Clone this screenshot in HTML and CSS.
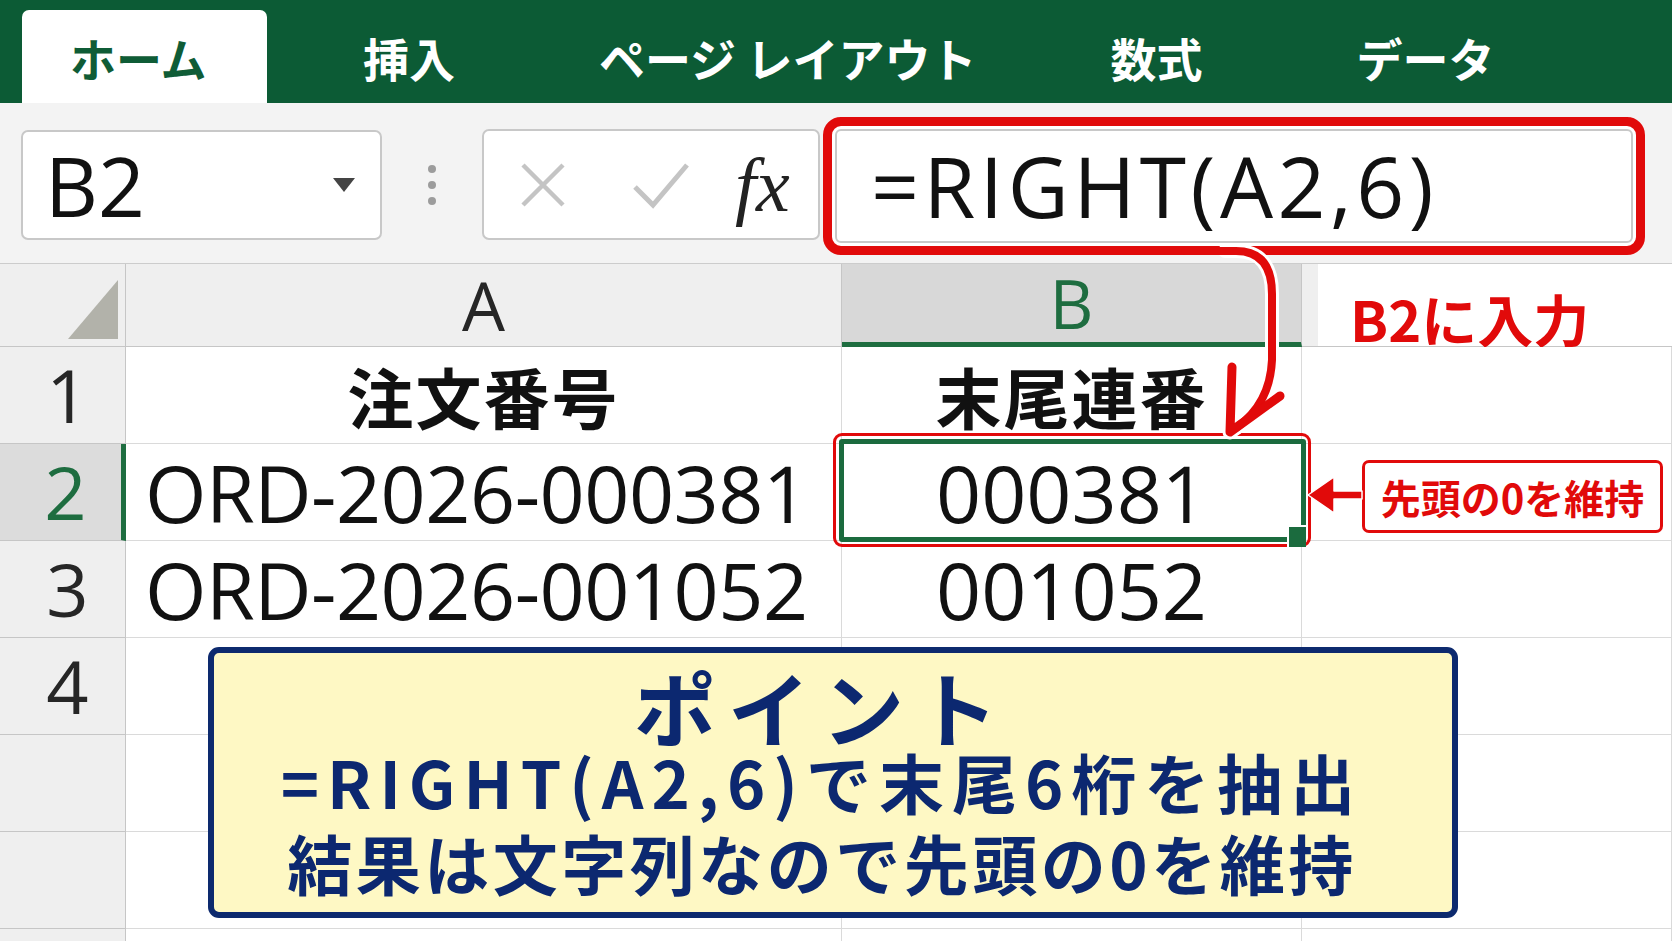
FILE: index.html
```html
<!DOCTYPE html>
<html lang="ja">
<head>
<meta charset="utf-8">
<title>RIGHT関数</title>
<link rel="stylesheet" href="styles.css">
</head>
<body>
<div class="app">
  <nav class="ribbon">
    <div class="tab active">ホーム</div>
    <div class="tab">挿入</div>
    <div class="tab">ページ レイアウト</div>
    <div class="tab tab-narrow">数式</div>
    <div class="tab">データ</div>
  </nav>

  <div class="fbar">
    <div class="namebox"><span class="nb-text">B2</span><span class="caret"></span></div>
    <div class="dots"><i></i><i></i><i></i></div>
    <div class="fnbox">
      <svg class="ic-x" width="48" height="48" viewBox="0 0 48 48"><path d="M4 4 L44 44 M44 4 L4 44" stroke="#c4c4c4" stroke-width="4.5" fill="none"/></svg>
      <svg class="ic-ok" width="58" height="48" viewBox="0 0 58 48"><path d="M3 26 L21 44 L55 4" stroke="#c4c4c4" stroke-width="5" fill="none"/></svg>
      <span class="fx">fx</span>
    </div>
    <div class="formula-wrap"><div class="formula">=RIGHT(A2,6)</div></div>
  </div>

  <div class="sheet">
    <div class="c h corner"><span class="tri"></span></div>
    <div class="c h ch">A</div>
    <div class="c h ch chb">B</div>
    <div class="c h chc"><div class="label">B2に入力</div></div>

    <div class="c h rh">1</div>
    <div class="c hd">注文番号</div>
    <div class="c hd">末尾連番</div>
    <div class="c"></div>

    <div class="c h rh rh-sel">2</div>
    <div class="c ca">ORD-2026-000381</div>
    <div class="c cb sel">000381<span class="red-ring"></span><span class="green-ring"></span><span class="handle"></span></div>
    <div class="c"></div>

    <div class="c h rh">3</div>
    <div class="c ca">ORD-2026-001052</div>
    <div class="c cb">001052</div>
    <div class="c"></div>

    <div class="c h rh">4</div>
    <div class="c"></div>
    <div class="c"></div>
    <div class="c"></div>

    <div class="c h rh"></div>
    <div class="c"></div>
    <div class="c"></div>
    <div class="c"></div>

    <div class="c h rh"></div>
    <div class="c"></div>
    <div class="c"></div>
    <div class="c"></div>

    <div class="c h rh"></div>
    <div class="c"></div>
    <div class="c"></div>
    <div class="c"></div>

    <div class="callout">先頭の0を維持</div>

    <div class="point">
      <div class="p1">ポイント</div>
      <div class="p2">=RIGHT(A2,6)で末尾6桁を抽出</div>
      <div class="p3">結果は文字列なので先頭の0を維持</div>
    </div>
  </div>

  <svg class="arrows" width="1672" height="941" viewBox="0 0 1672 941">
    <path d="M1225 251 L1236 251 Q1272 251 1272 294 L1272 360 Q1270 404 1236 428" stroke="#fff" stroke-width="14" fill="none" stroke-linecap="round"/>
    <path d="M1232 367 L1230 432 L1280 396" stroke="#fff" stroke-width="15" fill="none" stroke-linecap="round" stroke-linejoin="round"/>
    <path d="M1185 251 L1236 251 Q1272 251 1272 294 L1272 360 Q1270 404 1236 428" stroke="#e10a0a" stroke-width="8" fill="none" stroke-linecap="round"/>
    <path d="M1232 367 L1230 432 L1280 396" stroke="#e10a0a" stroke-width="9" fill="none" stroke-linecap="round" stroke-linejoin="round"/>
    <path d="M1362 491 L1334 491 L1334 477 L1308 495 L1334 513 L1334 499 L1362 499 Z" fill="#e10a0a" stroke="#fff" stroke-width="1.5" stroke-linejoin="round"/>
  </svg>
</div>
</body>
</html>
```

FILE: styles.css
```css
html, body {
  margin: 0;
  padding: 0;
}
body {
  width: 1672px;
  height: 941px;
  overflow: hidden;
  background: #ffffff;
  font-family: "Noto Sans CJK JP", "Noto Sans", sans-serif;
}
.app {
  position: relative;
  width: 1672px;
  height: 941px;
  overflow: hidden;
}

/* ribbon */
.ribbon {
  height: 103px;
  box-sizing: border-box;
  background: #0c5b35;
  display: flex;
  align-items: flex-end;
  padding-left: 22px;
  gap: 48px;
}
.tab {
  height: 93px;
  padding: 0 48px;
  display: flex;
  align-items: center;
  font-size: 46px;
  font-weight: 700;
  color: #ffffff;
  line-height: 1;
  white-space: nowrap;
}
.tab-narrow {
  margin-left: -10px;
  margin-right: 10px;
}
.tab.active {
  width: 245px;
  box-sizing: border-box;
  background: #ffffff;
  color: #0f5c36;
  border-radius: 7px 7px 0 0;
}

/* formula bar */
.fbar {
  height: 160px;
  box-sizing: border-box;
  background: #f3f3f3;
  display: flex;
  align-items: flex-start;
  padding: 27px 0 0 21px;
}
.namebox {
  width: 361px;
  height: 110px;
  box-sizing: border-box;
  border: 2px solid #c8c8c8;
  border-radius: 7px;
  background: #ffffff;
  display: flex;
  align-items: center;
  padding: 0 25px 0 22px;
}
.nb-text {
  font-family: "Open Sans", sans-serif;
  font-size: 82px;
  color: #111111;
  line-height: 1;
}
.caret {
  margin-left: auto;
  width: 0;
  height: 0;
  border-left: 11px solid transparent;
  border-right: 11px solid transparent;
  border-top: 14px solid #444444;
}
.dots {
  width: 100px;
  height: 110px;
  display: flex;
  flex-direction: column;
  align-items: center;
  justify-content: center;
  gap: 8px;
}
.dots i {
  display: block;
  width: 8px;
  height: 8px;
  border-radius: 50%;
  background: #9c9c9c;
}
.fnbox {
  width: 338px;
  height: 111px;
  box-sizing: border-box;
  margin-top: -1px;
  border: 2px solid #c8c8c8;
  border-radius: 7px;
  background: #ffffff;
  display: flex;
  align-items: center;
  padding-left: 35px;
}
.ic-ok {
  margin-left: 65px;
}
.fx {
  margin-left: 45px;
  font-family: "Liberation Serif", serif;
  font-style: italic;
  font-size: 76px;
  color: #222222;
  line-height: 1;
}
.formula-wrap {
  margin-left: 3px;
  margin-top: -13px;
  width: 822px;
  height: 138px;
  box-sizing: border-box;
  border: 9px solid #e10a0a;
  border-radius: 18px;
  padding: 3px;
  background: #ffffff;
}
.formula {
  height: 100%;
  box-sizing: border-box;
  border: 2px solid #c8c8c8;
  border-radius: 6px;
  background: #ffffff;
  display: flex;
  align-items: center;
  padding-left: 34px;
  font-family: "Open Sans", sans-serif;
  font-size: 84px;
  letter-spacing: 4.5px;
  color: #111111;
  line-height: 1;
}

/* sheet */
.sheet {
  position: relative;
  height: 678px;
  box-sizing: border-box;
  border-top: 1px solid #cccccc;
  display: grid;
  grid-template-columns: 126px 716px 460px 370px;
  grid-template-rows: 83px repeat(7, 97px);
}
.c {
  box-sizing: border-box;
  border-right: 1px solid #dadada;
  border-bottom: 1px solid #dadada;
  background: #ffffff;
  display: flex;
  align-items: center;
  min-width: 0;
}
.h {
  background: #efefef;
  border-color: #c6c6c6;
}
.corner {
  position: relative;
}
.tri {
  position: absolute;
  right: 7px;
  bottom: 7px;
  width: 50px;
  height: 59px;
  background: #b2b2aa;
  clip-path: polygon(100% 0, 100% 100%, 0 100%);
}
.ch {
  justify-content: center;
  font-family: "Open Sans", sans-serif;
  font-size: 68px;
  color: #262626;
  line-height: 1;
}
.chb {
  background: #d8d8d8;
  color: #1e6d40;
  border-bottom: 5px solid #1e6d40;
}
.chc {
  align-items: stretch;
  padding-left: 16px;
  border-right: none;
}
.label {
  flex: 1;
  background: #ffffff;
  display: flex;
  align-items: flex-end;
  padding-left: 32px;
  color: #e10a0a;
  font-weight: 700;
  font-size: 56px;
  line-height: 1;
}
.rh {
  justify-content: center;
  padding-left: 10px;
  font-family: "Open Sans", sans-serif;
  font-size: 74px;
  color: #262626;
  line-height: 1;
}
.rh-sel {
  background: #dcdcdc;
  color: #1e6d40;
  border-right: 5px solid #1e6d40;
}
.hd {
  justify-content: center;
  font-size: 66px;
  font-weight: 700;
  letter-spacing: 2px;
  color: #111111;
  line-height: 1;
}
.ca {
  padding-left: 19px;
  font-family: "Open Sans", sans-serif;
  font-size: 79px;
  letter-spacing: -0.5px;
  color: #111111;
  line-height: 1;
  white-space: nowrap;
}
.cb {
  justify-content: center;
  font-family: "Open Sans", sans-serif;
  font-size: 79px;
  color: #111111;
  line-height: 1;
}
.sel {
  position: relative;
}
.red-ring {
  position: absolute;
  top: -11px;
  left: -9px;
  right: -10px;
  bottom: -7px;
  border: 3px solid #e10a0a;
  border-radius: 9px;
}
.green-ring {
  position: absolute;
  top: -5px;
  left: -3px;
  right: -5px;
  bottom: -2px;
  border: 5px solid #1b6b3e;
  border-radius: 3px;
}
.handle {
  position: absolute;
  right: -5px;
  bottom: -7px;
  width: 17px;
  height: 20px;
  background: #1b6b3e;
  border-left: 2px solid #ffffff;
  border-top: 2px solid #ffffff;
}

/* callout */
.callout {
  position: absolute;
  left: 1362px;
  top: 196px;
  width: 301px;
  height: 73px;
  box-sizing: border-box;
  border: 3px solid #e10a0a;
  border-radius: 7px;
  background: #ffffff;
  display: flex;
  align-items: center;
  justify-content: center;
  color: #e10a0a;
  font-size: 40px;
  font-weight: 700;
  line-height: 1;
}

/* point box */
.point {
  position: absolute;
  left: 208px;
  top: 383px;
  width: 1250px;
  height: 271px;
  box-sizing: border-box;
  border: 6px solid #0d2a6e;
  border-radius: 11px;
  background: #fef8c4;
  padding: 9px 22px 0 0;
  display: flex;
  flex-direction: column;
  align-items: center;
  color: #0c2870;
  font-weight: 700;
  white-space: nowrap;
}
.p1 {
  height: 81px;
  line-height: 88px;
  font-size: 82px;
  letter-spacing: 12px;
}
.p2 {
  height: 76px;
  line-height: 76px;
  font-size: 65px;
  letter-spacing: 8px;
}
.p3 {
  margin-top: 5px;
  height: 76px;
  line-height: 76px;
  font-size: 65px;
  letter-spacing: 3.5px;
}

.arrows {
  position: absolute;
  left: 0;
  top: 0;
  pointer-events: none;
}
```
